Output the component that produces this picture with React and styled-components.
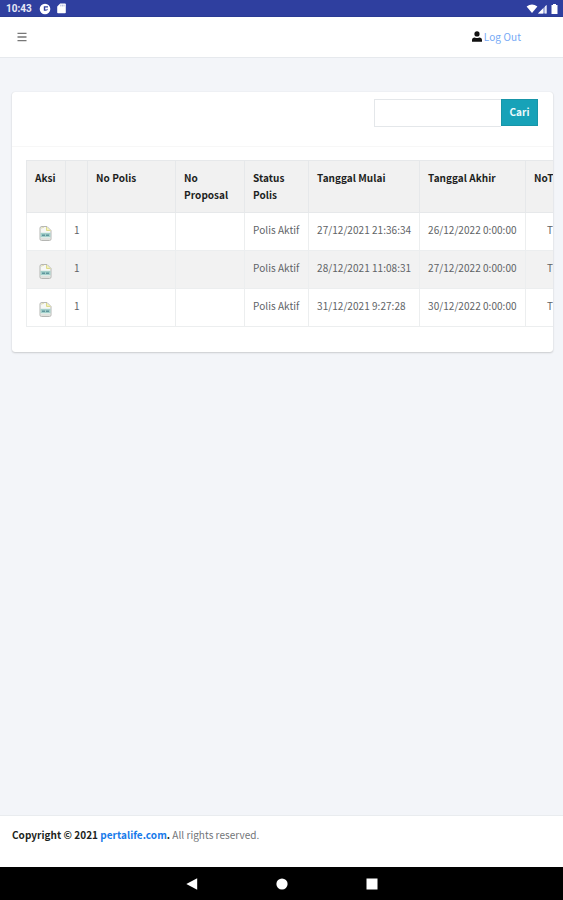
// App.jsx
import styled, { createGlobalStyle } from 'styled-components';

const policies = [
  { no: 1, status: 'Polis Aktif', start: '27/12/2021 21:36:34', end: '26/12/2022 0:00:00' },
  { no: 1, status: 'Polis Aktif', start: '28/12/2021 11:08:31', end: '27/12/2022 0:00:00' },
  { no: 1, status: 'Polis Aktif', start: '31/12/2021 9:27:28', end: '30/12/2022 0:00:00' },
];

function StatusIcons() {
  return (
    <StatusGroup>
      <svg width="12" height="12" viewBox="0 0 12 12">
        <path d="M0.6 3.6 Q6 -0.8 11.4 3.6 L6 10 Z" fill="#fff" />
      </svg>
      <svg width="9" height="12" viewBox="0 0 9 12">
        <path d="M0 10.5 L8.5 2 V10.5 Z" fill="#a9b2df" />
        <path d="M0 10.5 L5 5.5 V10.5 Z" fill="#fff" />
        <path d="M7.3 3.2 L8.5 2 V10.5 H7.3 Z" fill="#fff" />
      </svg>
      <BatteryIcon width="7" height="12" viewBox="0 0 7 12">
        <path d="M2 1 H5 V2 H6.5 V11 H0.5 V2 H2 Z" fill="#fff" />
      </BatteryIcon>
    </StatusGroup>
  );
}

function FileIcon() {
  return (
    <FileSvg viewBox="0 0 13 17">
      <path d="M3 1.5 H8 L12 5.5 V14 Q12 15.5 10.5 15.5 H2.5 Q1 15.5 1 14 V3 Q1 1.5 3 1.5Z" fill="#f7f8f5" stroke="#b5b6b3" strokeWidth="1" />
      <path d="M7.5 2 V5.5 H11.5" fill="#f3f1b5" stroke="#dcda8b" strokeWidth="1" />
      <path d="M2 3.2 L5 2.2" stroke="#e0deb0" strokeWidth="1" />
      <rect x="1.5" y="7.8" width="10" height="4.5" fill="#a3cfc9" />
      <path d="M3 10.3 H6 M7 10.3 H10" stroke="#5f969d" strokeWidth="1.5" />
      <path d="M2 14 H11" stroke="#c9cbc5" strokeWidth="1" />
    </FileSvg>
  );
}

function App() {
  return (
    <Screen>
      <GlobalStyle />
      <StatusBar>
        <StatusGroup>
          <Clock>10:43</Clock>
          <svg width="12" height="12" viewBox="0 0 12 12">
            <circle cx="6" cy="6" r="5.3" fill="#fff" />
            <path d="M4.8 3.2 H9 V5.8 Q8.8 7.8 6.6 7.8 H4.8 Z" fill="#303f9f" />
            <path d="M6.2 4.6 H9 V5.6 Q8.8 6.6 7.2 6.6 H6.2 Z" fill="#fff" />
          </svg>
          <SdIcon width="9" height="11" viewBox="0 0 9 11">
            <path d="M3.2 0.5 H8 Q8.8 0.5 8.8 1.3 V9.5 Q8.8 10.3 8 10.3 H1 Q0.2 10.3 0.2 9.5 V3.5 Z" fill="#fff" />
            <path d="M3.8 1.7 V3.4 M5.4 1.7 V3.4 M7 1.7 V3.4" stroke="#9ba4d4" strokeWidth="0.8" />
          </SdIcon>
        </StatusGroup>
        <StatusIcons />
      </StatusBar>

      <Navbar>
        <svg width="10" height="10" viewBox="0 0 10 10">
          <path d="M0.5 1.3 H9.5 M0.5 5 H9.5 M0.5 8.7 H9.5" stroke="#777" strokeWidth="1.3" />
        </svg>
        <UserMenu>
          <svg width="10" height="11" viewBox="0 0 10 11">
            <circle cx="5" cy="2.9" r="2.6" fill="#111" />
            <path d="M0 10.8 V9.2 Q0 6.4 2.8 6.4 Q5 7.5 7.2 6.4 Q10 6.4 10 9.2 V10.8 Z" fill="#111" />
          </svg>
          <LogoutLink>Log Out</LogoutLink>
        </UserMenu>
      </Navbar>

      <Content>
        <Card>
          <CardHeader>
            <SearchInput type="text" />
            <SearchButton>Cari</SearchButton>
          </CardHeader>
          <TableWrapper>
            <Table>
              <colgroup>
                <Col $width={39} />
                <Col $width={22} />
                <Col $width={88} />
                <Col $width={69} />
                <Col $width={64} />
                <Col $width={111} />
                <Col $width={106} />
                <Col $width={61} />
              </colgroup>
              <thead>
                <tr>
                  <Th>Aksi</Th>
                  <Th />
                  <Th>No Polis</Th>
                  <Th>No Proposal</Th>
                  <Th>Status Polis</Th>
                  <Th>Tanggal Mulai</Th>
                  <Th>Tanggal Akhir</Th>
                  <Th>NoT</Th>
                </tr>
              </thead>
              <tbody>
                {policies.map((policy) => (
                  <Row key={policy.start}>
                    <Td $icon><FileIcon /></Td>
                    <Td>{policy.no}</Td>
                    <Td />
                    <Td />
                    <Td>{policy.status}</Td>
                    <Td>{policy.start}</Td>
                    <Td>{policy.end}</Td>
                    <Td $indent>T</Td>
                  </Row>
                ))}
              </tbody>
            </Table>
          </TableWrapper>
        </Card>
      </Content>

      <Footer>
        <strong>Copyright © 2021 <SiteLink>pertalife.com</SiteLink>.</strong> All rights reserved.
      </Footer>

      <AndroidNav>
        <svg width="12" height="12" viewBox="0 0 12 12">
          <path d="M0.3 6 L11.2 0.2 V11.8 Z" fill="#fff" />
        </svg>
        <svg width="12" height="12" viewBox="0 0 12 12">
          <circle cx="6" cy="6" r="5.6" fill="#fff" />
        </svg>
        <svg width="12" height="12" viewBox="0 0 12 12">
          <rect x="0.5" y="0.5" width="11" height="11" fill="#fff" />
        </svg>
      </AndroidNav>
    </Screen>
  );
}

export default App;


const GlobalStyle = createGlobalStyle`
  * {
    box-sizing: border-box;
  }

  body {
    margin: 0;
    background-color: #f3f5f9;
    font-family: 'Noto Sans CJK JP', 'Open Sans', sans-serif;
    font-size: 10px;
    color: #212529;
  }
`;

const Screen = styled.div`
  display: flex;
  flex-direction: column;
  width: 100%;
  height: 900px;
  overflow: hidden;
`;

const StatusBar = styled.div`
  display: flex;
  align-items: center;
  justify-content: space-between;
  flex: none;
  height: 17px;
  padding: 1px 5px 0 6px;
  background-color: #2f3f9f;
  border-bottom: 1px solid #2a3b93;
`;

const StatusGroup = styled.div`
  display: flex;
  align-items: center;
`;

const Clock = styled.span`
  width: 33px;
  color: #e8eaf6;
  font-family: Roboto, sans-serif;
  font-size: 10px;
  font-weight: 700;
`;

const SdIcon = styled.svg`
  margin-left: 6px;
`;

const BatteryIcon = styled.svg`
  margin-left: 4px;
`;

const Navbar = styled.nav`
  display: flex;
  align-items: center;
  justify-content: space-between;
  flex: none;
  height: 41px;
  padding: 0 42px 1px 17px;
  background-color: #fff;
  border-bottom: 1px solid #e6e9ed;
`;

const UserMenu = styled.div`
  display: flex;
  align-items: center;
  gap: 2px;
`;

const LogoutLink = styled.a`
  color: #75a9f5;
  letter-spacing: 0.1px;
  line-height: 16px;
`;

const Content = styled.main`
  flex: 1;
  padding: 34px 10px 0 12px;
`;

const Card = styled.section`
  height: 260px;
  background-color: #fff;
  border-radius: 3px;
  box-shadow: 0 0 1px rgba(0, 0, 0, 0.13), 0 1px 2px rgba(0, 0, 0, 0.16);
`;

const CardHeader = styled.div`
  display: flex;
  justify-content: flex-end;
  height: 55px;
  padding: 7px 15px 0 0;
  border-bottom: 1px solid #f7f7f7;
`;

const SearchInput = styled.input`
  width: 127px;
  height: 28px;
  border: 1px solid #e4e7ea;
  border-right: none;
  outline: none;
  background-color: #fff;
`;

const SearchButton = styled.button`
  width: 37px;
  height: 27px;
  padding: 0 0 2px;
  border: 1px solid #1795a8;
  background-color: #17a2b8;
  color: #eefafc;
  font-family: inherit;
  font-size: 10px;
  font-weight: 700;
`;

const TableWrapper = styled.div`
  padding: 13px 0 0 13.5px;
  overflow: hidden;
`;

const Table = styled.table`
  width: 560px;
  table-layout: fixed;
  border-collapse: collapse;
  letter-spacing: 0.04px;
`;

const Col = styled.col`
  width: ${({ $width }) => $width}px;
`;

const Th = styled.th`
  height: 52px;
  padding: 8px 7px 0 8.6px;
  border: 1px solid #e6e8ea;
  background-color: #f1f1f1;
  color: #1d1f21;
  line-height: 17px;
  text-align: left;
  vertical-align: top;
`;

const Td = styled.td`
  height: 38px;
  padding: ${({ $icon }) => ($icon ? '12px 0 0 12px' : '8px 7px 0 8.6px')};
  padding-left: ${({ $indent }) => $indent && '21.5px'};
  border: 1px solid #eceeef;
  color: #606366;
  line-height: 17px;
  vertical-align: top;
  white-space: nowrap;
`;

const Row = styled.tr`
  &:nth-child(even) {
    background-color: #f2f2f2;
  }
`;

const FileSvg = styled.svg`
  display: block;
  width: 13px;
  height: 17px;
`;

const Footer = styled.footer`
  flex: none;
  height: 52px;
  padding: 11px 12px;
  background-color: #fff;
  border-top: 1px solid #e9ecef;
  color: #717477;
  letter-spacing: 0.03px;
  line-height: 16px;

  strong {
    color: #1d1f21;
  }
`;

const SiteLink = styled.a`
  color: #187bea;
`;

const AndroidNav = styled.div`
  display: flex;
  align-items: center;
  justify-content: center;
  gap: 78px;
  flex: none;
  height: 33px;
  background-color: #000;
`;
